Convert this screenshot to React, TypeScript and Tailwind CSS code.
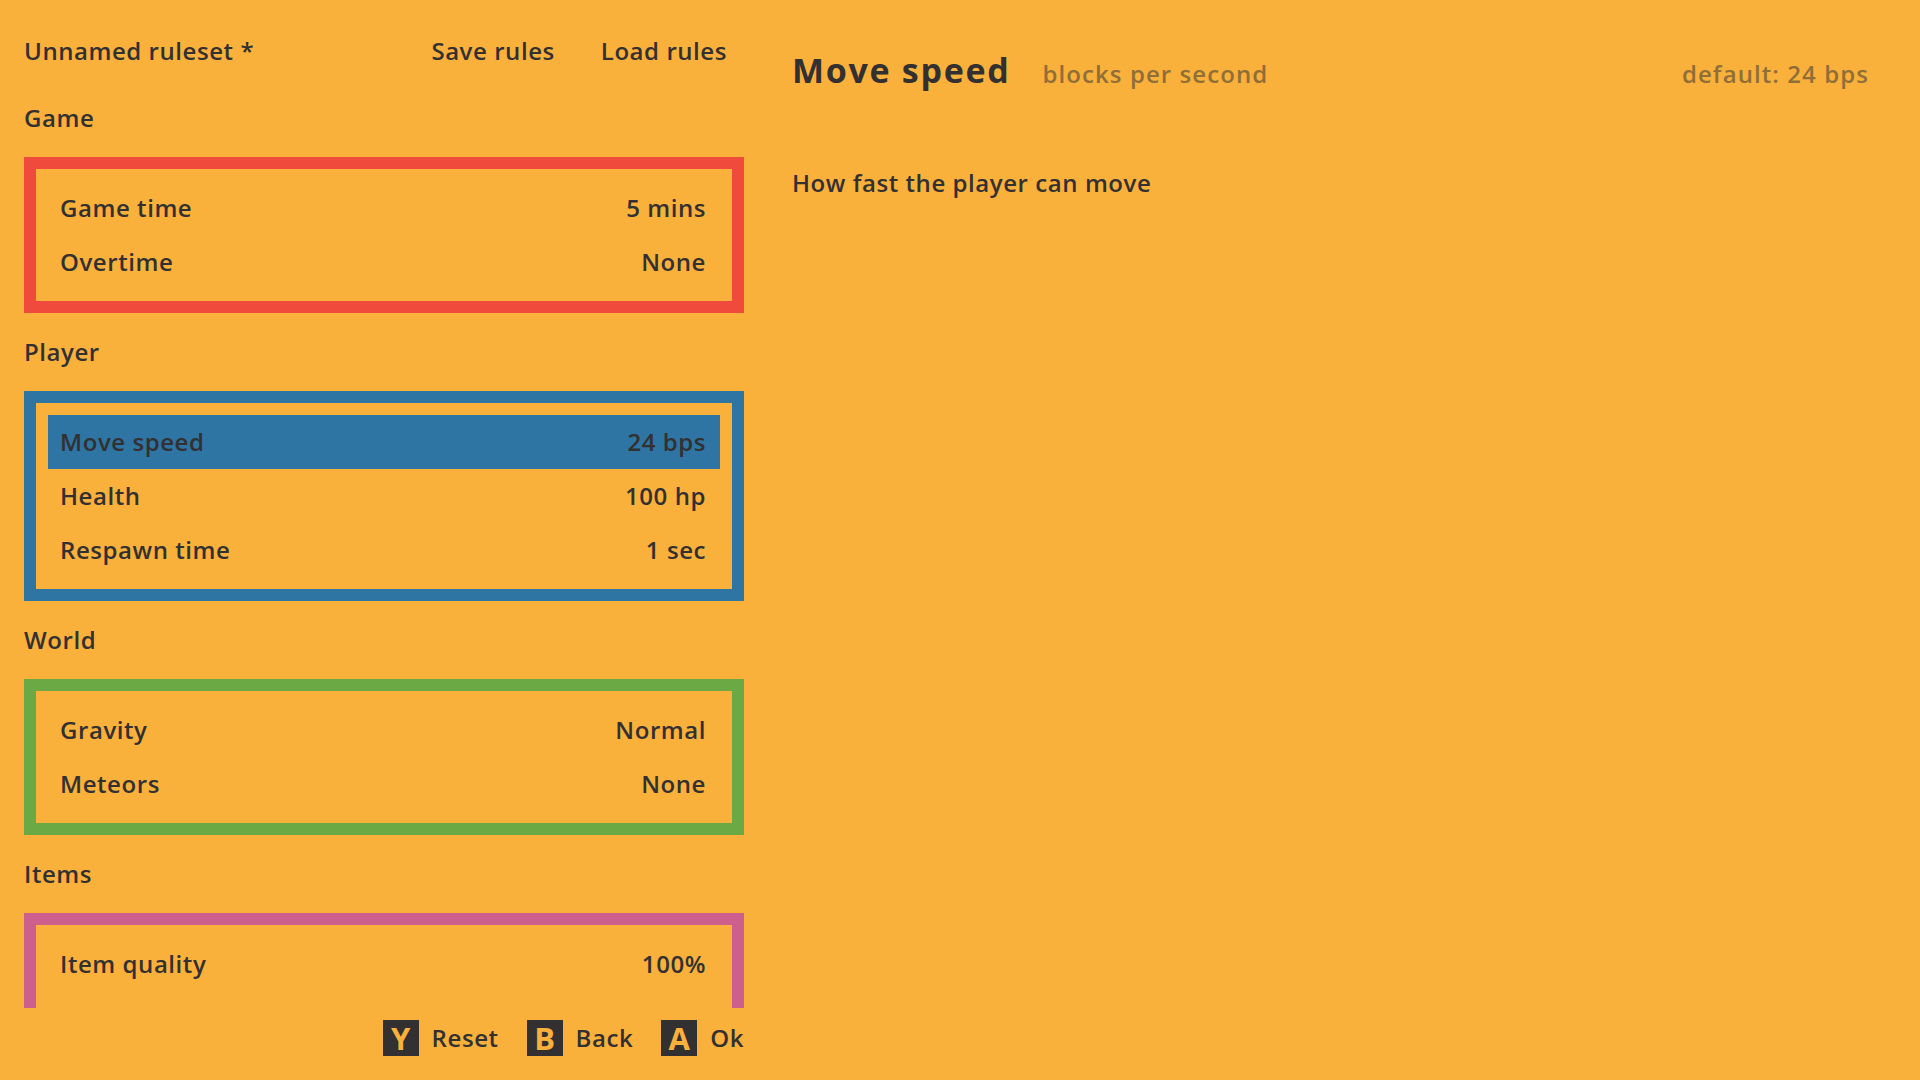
import React from "react";

type Row = { label: string; value: string; selected?: boolean };
type Section = { title: string; border: string; rows: Row[] };

const sections: Section[] = [
  {
    title: "Game",
    border: "border-[#ef4a3b]",
    rows: [
      { label: "Game time", value: "5 mins" },
      { label: "Overtime", value: "None" },
    ],
  },
  {
    title: "Player",
    border: "border-[#2e75a4]",
    rows: [
      { label: "Move speed", value: "24 bps", selected: true },
      { label: "Health", value: "100 hp" },
      { label: "Respawn time", value: "1 sec" },
    ],
  },
  {
    title: "World",
    border: "border-[#6aa944]",
    rows: [
      { label: "Gravity", value: "Normal" },
      { label: "Meteors", value: "None" },
    ],
  },
  {
    title: "Items",
    border: "border-[#cc5f8d]",
    rows: [
      { label: "Item quality", value: "100%" },
      { label: "Item spawn rate", value: "Normal" },
    ],
  },
];

function Key({ k, label }: { k: string; label: string }) {
  return (
    <div className="flex items-center gap-[13px]">
      <div className="w-[36px] h-[36px] bg-[#333032] text-[#fab13b] flex items-center justify-center text-[31px] font-bold leading-none tracking-normal">
        {k}
      </div>
      <span className="text-[24px] leading-[32px]">{label}</span>
    </div>
  );
}

export default function App() {
  return (
    <div
      className="w-[1920px] h-[1080px] bg-[#fab13b] text-[#333032] flex overflow-hidden font-semibold tracking-[0.035em]"
      style={{ fontFamily: '"Open Sans", "Noto Sans", sans-serif' }}
    >
      <div className="w-[744px] pl-[24px] flex flex-col h-full">
        <div className="pt-[35px] flex items-center h-[67px] text-[24px] leading-[32px]">
          <span>Unnamed ruleset *</span>
          <div className="ml-auto flex gap-[46px] pr-[17px]">
            <span>Save rules</span>
            <span>Load rules</span>
          </div>
        </div>
        <div className="mt-[35px] flex-1 min-h-0 overflow-hidden flex flex-col gap-[23px]">
          {sections.map((s) => (
            <React.Fragment key={s.title}>
              <div className="text-[24px] leading-[32px] h-[32px] shrink-0">{s.title}</div>
              <div className={`border-[12px] ${s.border} p-[12px] shrink-0`}>
                {s.rows.map((r) => (
                  <div
                    key={r.label}
                    className={`h-[54px] flex items-center justify-between pl-[12px] pr-[14px] text-[24px] ${
                      r.selected ? "bg-[#2e75a4]" : ""
                    }`}
                  >
                    <span>{r.label}</span>
                    <span>{r.value}</span>
                  </div>
                ))}
              </div>
            </React.Fragment>
          ))}
        </div>
        <div className="h-[72px] pt-[12px] flex justify-end items-start gap-[28px] shrink-0">
          <Key k="Y" label="Reset" />
          <Key k="B" label="Back" />
          <Key k="A" label="Ok" />
        </div>
      </div>
      <div className="flex-1 pl-[48px] pr-[51px] pt-[48px]">
        <div className="flex items-baseline">
          <span className="text-[34px] leading-[44px] font-bold tracking-[0.05em]">Move speed</span>
          <span className="ml-[32px] text-[24px] text-[#8f6e38] tracking-[0.045em]">blocks per second</span>
          <span className="ml-auto text-[24px] text-[#8f6e38] tracking-[0.045em]">default: 24 bps</span>
        </div>
        <div className="mt-[75px] text-[24px] leading-[32px]">How fast the player can move</div>
      </div>
    </div>
  );
}
